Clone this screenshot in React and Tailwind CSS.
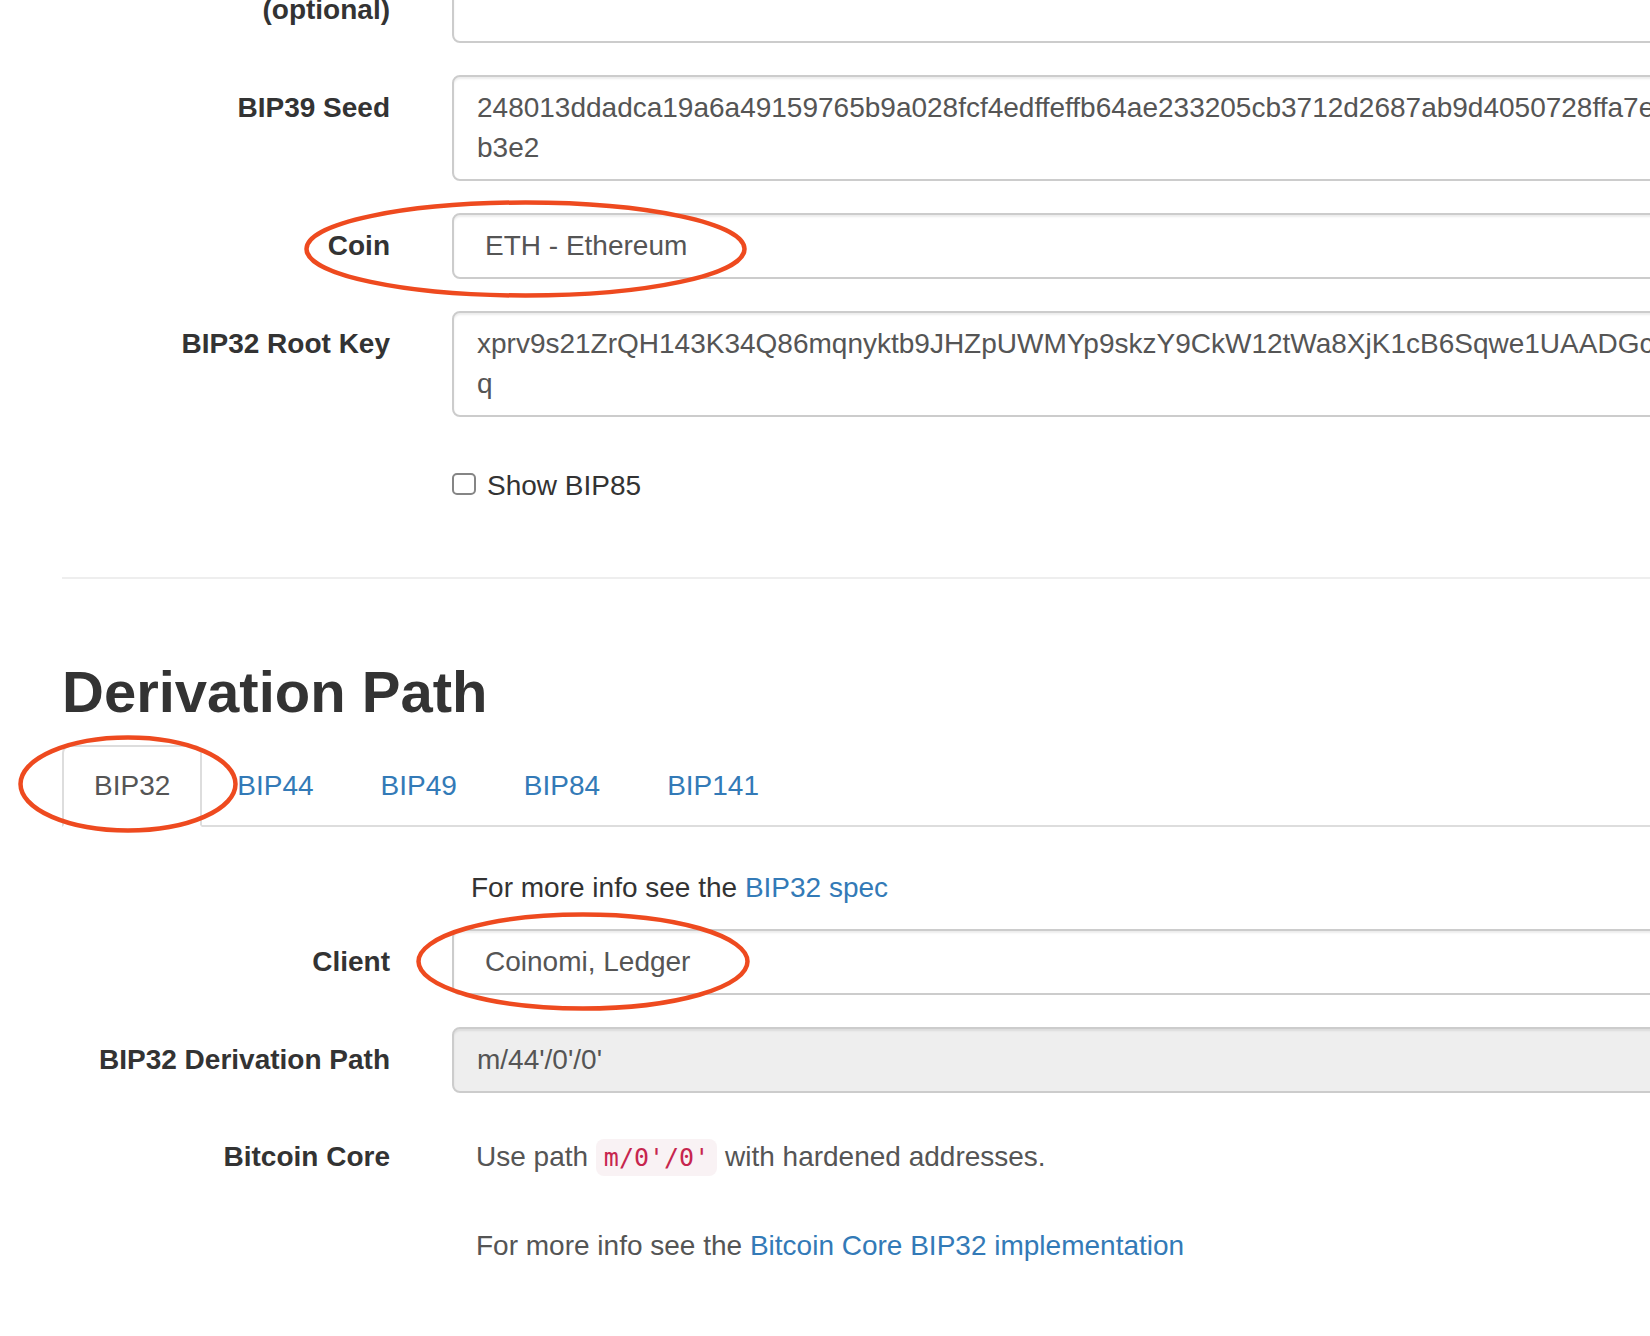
import React from 'react';

const font = { fontFamily: '"Liberation Sans", Arial, sans-serif' };
const mono = { fontFamily: '"DejaVu Sans Mono", "Liberation Mono", monospace' };

const seedLine1 =
    '248013ddadca19a6a49159765b9a028fcf4edffeffb64ae233205cb3712d2687ab9d4050728ffa7e1c0d9f3a2b6c48e5d07f1a93c';
const rootLine1 =
    'xprv9s21ZrQH143K34Q86mqnyktb9JHZpUWMYp9skzY9CkW12tWa8XjK1cB6Sqwe1UAADGcr4TgWbq7nLzjF2pYdHk8Ve3MwRx';

const tabs = ['BIP32', 'BIP44', 'BIP49', 'BIP84', 'BIP141'];

// fila del formulario: etiqueta a la derecha + control
const Row = ({ label, className = '', children }) => (
    <div className={`flex ${className}`}>
        <label className="w-[328px] shrink-0 pt-[13px] text-right font-bold leading-[40px] text-[#333]">
            {label}
        </label>
        <div className="ml-[62px] flex-1">{children}</div>
    </div>
);

const inputBase =
    'rounded-lg border-2 border-[#ccc] py-[11px] leading-[40px] text-[#555] shadow-[inset_0_2px_2px_rgba(0,0,0,0.075)]';

const TextArea = ({ lines }) => (
    <div className={`${inputBase} h-[106px] overflow-hidden bg-white px-[23px]`}>
        {lines.map((l, i) => (
            <div key={i} className="overflow-hidden whitespace-nowrap">
                {l}
            </div>
        ))}
    </div>
);

const Select = ({ value }) => (
    <div className={`${inputBase} h-[66px] overflow-hidden bg-white pl-[31px] pr-[23px] whitespace-nowrap`}>{value}</div>
);

const App = () => {
    return (
        <div className="relative h-[1336px] w-[1650px] overflow-hidden bg-white text-[28px]" style={font}>
            <div className="w-[2300px] px-[62px]">
                <div className="-ml-[62px] mt-[-23px]">
                    <Row label="(optional)" className="mb-[32px] pl-[62px]">
                        <div className={`${inputBase} h-[66px] bg-white`} />
                    </Row>
                    <Row label="BIP39 Seed" className="mb-[32px] pl-[62px]">
                        <TextArea lines={[seedLine1, 'b3e2']} />
                    </Row>
                    <Row label="Coin" className="mb-[32px] pl-[62px]">
                        <Select value="ETH - Ethereum" />
                    </Row>
                    <Row label="BIP32 Root Key" className="pl-[62px]">
                        <TextArea lines={[rootLine1, 'q']} />
                    </Row>
                    <div className="mt-[49px] flex h-[40px] items-center pl-[452px] leading-[40px] text-[#333]">
                        <span className="mt-[-4px] h-[22px] w-[24px] rounded-[5px] border-2 border-[#858585] bg-white" />
                        <span className="ml-[11px]">Show BIP85</span>
                    </div>
                </div>

                <hr className="mt-[71px] border-0 border-t-2 border-[#eee]" />

                <h2 className="mt-[81px] text-[58px] font-bold leading-[64px] text-[#333]">Derivation Path</h2>

                <ul className="mt-[21px] flex border-b-2 border-[#ddd]">
                    {tabs.map((t, i) => (
                        <li key={t} className="mb-[-2px] mr-[3px]">
                            <span
                                className={
                                    i === 0
                                        ? 'block rounded-t-lg border-2 border-[#ddd] border-b-white bg-white px-[30px] py-[19px] leading-[40px] text-[#555]'
                                        : 'block border-2 border-transparent px-[30px] py-[19px] leading-[40px] text-[#337ab7]'
                                }
                            >
                                {t}
                            </span>
                        </li>
                    ))}
                </ul>

                <div className="-ml-[62px]">
                    <p className="mt-[41px] pl-[471px] leading-[40px] text-[#333]">
                        For more info see the <span className="text-[#337ab7]">BIP32 spec</span>
                    </p>
                    <Row label="Client" className="mt-[21px] pl-[62px]">
                        <Select value="Coinomi, Ledger" />
                    </Row>
                    <Row label="BIP32 Derivation Path" className="mt-[32px] pl-[62px]">
                        <div className={`${inputBase} h-[66px] bg-[#eee] px-[23px]`}>m/44'/0'/0'</div>
                    </Row>
                    <Row label="Bitcoin Core" className="mt-[31px] pl-[62px]">
                        <p className="pl-[24px] pt-[13px] leading-[40px] text-[#555]">
                            Use path{' '}
                            <code
                                className="rounded-lg bg-[#f9f2f4] px-[8px] py-[4px] text-[25px] text-[#c7254e]"
                                style={mono}
                            >
                                m/0'/0'
                            </code>{' '}
                            with hardened addresses.
                        </p>
                    </Row>
                    <p className="mt-[48px] pl-[476px] leading-[40px] text-[#555]">
                        For more info see the <span className="text-[#337ab7]">Bitcoin Core BIP32 implementation</span>
                    </p>
                </div>
            </div>

            {/* anotaciones en rojo */}
            <svg className="pointer-events-none absolute left-0 top-0" width="1650" height="1336" viewBox="0 0 1650 1336">
                <g fill="none" stroke="#ee4a1f" strokeWidth="4.5">
                    <ellipse cx="525.5" cy="249" rx="219" ry="46.5" />
                    <ellipse cx="128" cy="784" rx="107.5" ry="46.5" />
                    <ellipse cx="583" cy="961.5" rx="164.5" ry="47" />
                </g>
            </svg>
        </div>
    );
};

export default App;
